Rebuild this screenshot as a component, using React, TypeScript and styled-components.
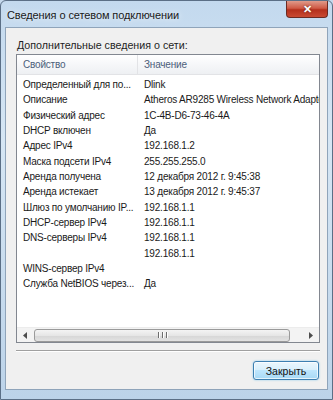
import React from 'react';
import styled, { createGlobalStyle } from 'styled-components';

const GlobalStyle = createGlobalStyle`
    html, body {
        margin: 0;
        padding: 0;
        background: #c4d8ec;
    }
    * {
        box-sizing: border-box;
    }
`;

const FONT = `'Liberation Sans', Arial, sans-serif`;

const rows: { name: string; value: string }[] = [
    { name: 'Определенный для по...', value: 'Dlink' },
    { name: 'Описание', value: 'Atheros AR9285 Wireless Network Adapter' },
    { name: 'Физический адрес', value: '1C-4B-D6-73-46-4A' },
    { name: 'DHCP включен', value: 'Да' },
    { name: 'Адрес IPv4', value: '192.168.1.2' },
    { name: 'Маска подсети IPv4', value: '255.255.255.0' },
    { name: 'Аренда получена', value: '12 декабря 2012 г. 9:45:38' },
    { name: 'Аренда истекает', value: '13 декабря 2012 г. 9:45:37' },
    { name: 'Шлюз по умолчанию IP...', value: '192.168.1.1' },
    { name: 'DHCP-сервер IPv4', value: '192.168.1.1' },
    { name: 'DNS-серверы IPv4', value: '192.168.1.1' },
    { name: '', value: '192.168.1.1' },
    { name: 'WINS-сервер IPv4', value: '' },
    { name: 'Служба NetBIOS через...', value: 'Да' },
];

const Window = styled.div`
    width: 333px;
    height: 400px;
    display: flex;
    flex-direction: column;
    background: linear-gradient(180deg, #c3d9ee 0%, #d6e6f4 35%, #bcd3e9 100%);
    border: 1px solid #5b6f86;
    border-radius: 6px 6px 0 0;
    font-family: ${FONT};
    overflow: hidden;
`;

const TitleBar = styled.div`
    height: 26px;
    display: flex;
    align-items: flex-start;
    flex-shrink: 0;
`;

const Title = styled.div`
    font-size: 11px;
    letter-spacing: -0.1px;
    color: #1a1a1a;
    padding: 8px 0 0 6px;
    flex: 1;
    text-shadow: 0 0 6px rgba(255, 255, 255, 0.9);
`;

const CloseButton = styled.div`
    width: 42px;
    height: 17px;
    margin-right: 4px;
    border: 1px solid #6b2a22;
    border-top: none;
    border-radius: 0 0 4px 4px;
    background: linear-gradient(180deg, #e09a8a 0%, #cf5a45 45%, #b4301c 55%, #c94a32 100%);
    display: flex;
    align-items: center;
    justify-content: center;
    color: #fff;
    font-size: 11px;
    font-weight: bold;
    text-shadow: 0 0 2px #5a1a10;
`;

const Client = styled.div`
    flex: 1;
    margin: 0 4px 9px 4px;
    background: #f0f0f0;
    border: 1px solid #8fa4ba;
    display: flex;
    flex-direction: column;
    padding: 10px 7px 0 10px;
`;

const GroupLabel = styled.div`
    font-size: 10.7px;
    color: #1e1e1e;
    height: 15px;
    line-height: 14px;
    margin-bottom: 1px;
    padding-left: 1px;
`;

const ListView = styled.div`
    height: 289px;
    background: #fff;
    border: 1px solid #828790;
    display: flex;
    flex-direction: column;
    overflow: hidden;
`;

const Header = styled.div`
    height: 20px;
    display: flex;
    background: linear-gradient(180deg, #ffffff 0%, #f6f7f9 50%, #eef0f3 100%);
    border-bottom: 1px solid #e2e3e6;
    flex-shrink: 0;
    margin-bottom: 2px;
`;

const HeaderCell = styled.div<{ $w?: number }>`
    ${p => (p.$w ? `width: ${p.$w}px;` : 'flex: 1;')}
    font-size: 10px;
    letter-spacing: -0.2px;
    line-height: 19px;
    color: #4c607a;
    padding-left: 6px;
    border-right: ${p => (p.$w ? '1px solid #e2e3e6' : 'none')};
    white-space: nowrap;
`;

const Body = styled.div`
    flex: 1;
    overflow: hidden;
`;

const Row = styled.div`
    height: 15.35px;
    display: flex;
    font-size: 10px;
    letter-spacing: -0.2px;
    line-height: 15px;
    color: #1a1a1a;
    white-space: nowrap;
`;

const Cell = styled.div<{ $w?: number }>`
    ${p => (p.$w ? `width: ${p.$w}px;` : 'flex: 1;')}
    padding-left: 6px;
    overflow: hidden;
`;

const ScrollBar = styled.div`
    height: 15px;
    flex-shrink: 0;
    display: flex;
    align-items: center;
    background: #f3f3f3;
    border-top: 1px solid #ececec;
`;

const Arrow = styled.div`
    width: 17px;
    display: flex;
    justify-content: center;
    align-items: center;
`;

const Track = styled.div`
    flex: 1;
    height: 13px;
    display: flex;
`;

const Thumb = styled.div`
    width: 256px;
    height: 13px;
    border: 1px solid #9a9a9a;
    border-radius: 3px;
    background: linear-gradient(180deg, #f4f4f4 0%, #e6e6e6 50%, #d6d6d6 51%, #e2e2e2 100%);
    display: flex;
    align-items: center;
    justify-content: center;
    gap: 1px;
`;

const Grip = styled.span`
    width: 1px;
    height: 6px;
    background: #6d6d6d;
    box-shadow: 1px 0 0 #fff;
    margin: 0 1px;
`;

const Separator = styled.div`
    height: 2px;
    margin-top: 7px;
    border-top: 1px solid #a0a0a0;
    border-bottom: 1px solid #ffffff;
`;

const Footer = styled.div`
    display: flex;
    justify-content: flex-end;
    padding-top: 9px;
    padding-right: 1px;
`;

const Button = styled.div`
    width: 66px;
    height: 19px;
    border: 1px solid #3c7fb1;
    border-radius: 3px;
    background: linear-gradient(180deg, #eaf6fd 0%, #d9f0fc 45%, #bee6fd 50%, #a7d9f5 100%);
    box-shadow: inset 0 0 0 1px rgba(255, 255, 255, 0.7), 0 0 2px #7ec4ea;
    display: flex;
    align-items: center;
    justify-content: center;
    font-size: 10.5px;
    color: #111;
`;

const ArrowIcon: React.FC<{ dir: 'left' | 'right' }> = ({ dir }) => (
    <svg width="5" height="7" viewBox="0 0 5 7">
        {dir === 'left' ? <polygon points="4,0 4,7 0,3.5" fill="#4d4d4d" /> : <polygon points="1,0 1,7 5,3.5" fill="#4d4d4d" />}
    </svg>
);

const NAME_W = 121;

export default function App() {
    return (
        <>
            <GlobalStyle />
            <Window>
                <TitleBar>
                    <Title>Сведения о сетевом подключении</Title>
                    <CloseButton>✕</CloseButton>
                </TitleBar>
                <Client>
                    <GroupLabel>Дополнительные сведения о сети:</GroupLabel>
                    <ListView>
                        <Header>
                            <HeaderCell $w={NAME_W}>Свойство</HeaderCell>
                            <HeaderCell>Значение</HeaderCell>
                        </Header>
                        <Body>
                            {rows.map((r, i) => (
                                <Row key={i}>
                                    <Cell $w={NAME_W}>{r.name}</Cell>
                                    <Cell>{r.value}</Cell>
                                </Row>
                            ))}
                        </Body>
                        <ScrollBar>
                            <Arrow>
                                <ArrowIcon dir="left" />
                            </Arrow>
                            <Track>
                                <Thumb>
                                    <Grip />
                                    <Grip />
                                    <Grip />
                                </Thumb>
                            </Track>
                            <Arrow>
                                <ArrowIcon dir="right" />
                            </Arrow>
                        </ScrollBar>
                    </ListView>
                    <Separator />
                    <Footer>
                        <Button>Закрыть</Button>
                    </Footer>
                </Client>
            </Window>
        </>
    );
}
